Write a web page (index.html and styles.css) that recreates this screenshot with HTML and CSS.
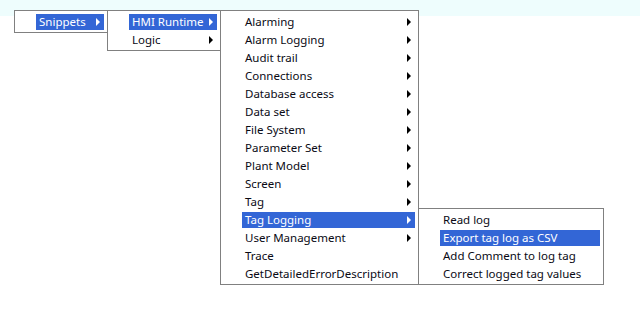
FILE: index.html
```html
<!DOCTYPE html>
<html lang="en">
<head>
    <meta charset="UTF-8">
    <title>Snippets menu</title>
    <link rel="stylesheet" href="styles.css">
</head>
<body>
    <div class="strip"></div>
    <div class="menus">
        <ul class="menu m1">
            <li class="item sel"><span>Snippets</span><i class="arrow"></i></li>
        </ul>
        <ul class="menu m2">
            <li class="item sel"><span>HMI Runtime</span><i class="arrow"></i></li>
            <li class="item"><span>Logic</span><i class="arrow"></i></li>
        </ul>
        <ul class="menu m3">
            <li class="item"><span>Alarming</span><i class="arrow"></i></li>
            <li class="item"><span>Alarm Logging</span><i class="arrow"></i></li>
            <li class="item"><span>Audit trail</span><i class="arrow"></i></li>
            <li class="item"><span>Connections</span><i class="arrow"></i></li>
            <li class="item"><span>Database access</span><i class="arrow"></i></li>
            <li class="item"><span>Data set</span><i class="arrow"></i></li>
            <li class="item"><span>File System</span><i class="arrow"></i></li>
            <li class="item"><span>Parameter Set</span><i class="arrow"></i></li>
            <li class="item"><span>Plant Model</span><i class="arrow"></i></li>
            <li class="item"><span>Screen</span><i class="arrow"></i></li>
            <li class="item"><span>Tag</span><i class="arrow"></i></li>
            <li class="item sel"><span>Tag Logging</span><i class="arrow"></i></li>
            <li class="item"><span>User Management</span><i class="arrow"></i></li>
            <li class="item"><span>Trace</span></li>
            <li class="item"><span>GetDetailedErrorDescription</span></li>
        </ul>
        <ul class="menu m4">
            <li class="item"><span>Read log</span></li>
            <li class="item sel"><span>Export tag log as CSV</span></li>
            <li class="item"><span>Add Comment to log tag</span></li>
            <li class="item"><span>Correct logged tag values</span></li>
        </ul>
    </div>
</body>
</html>
```

FILE: styles.css
```css
/*--page------------------------------------------------------------*/
html, body {
    margin: 0;
    padding: 0;
    background: #fff;
}
body {
    position: relative;
    width: 640px;
    height: 311px;
    overflow: hidden;
    font-family: "Noto Sans", "Open Sans", sans-serif;
    font-size: 11.5px;
    color: #0a0a14;
}
.strip {
    position: absolute;
    left: 0;
    top: 0;
    width: 100%;
    height: 16px;
    background: #eefdfd;
}

/*--cascading menus--------------------------------------------------*/
.menus {
    position: relative;
    display: flex;
    align-items: flex-start;
    padding: 10px 0 0 14px;
}
.menu {
    list-style: none;
    margin: 0 0 0 -1px;
    padding: 3px 3px 0 21px;
    border: 1px solid #808080;
    background: #fff;
}
.menu.m1 { margin-left: 0; width: 68px; }
.menu.m2 { width: 88px; }
.menu.m3 { width: 173px; }
.menu.m4 { width: 160px; margin-top: 198px; }

.item {
    display: flex;
    justify-content: space-between;
    align-items: center;
    box-sizing: border-box;
    height: 16px;
    margin-bottom: 2px;
    padding: 0 4px 1px 3px;
    white-space: nowrap;
    line-height: 15px;
}
.item.sel {
    background: #3366d6;
    color: #fff;
}
.arrow {
    display: block;
    width: 0;
    height: 0;
    margin-top: 1px;
    border-left: 4px solid #000;
    border-top: 4px solid transparent;
    border-bottom: 4px solid transparent;
}
.item.sel .arrow {
    border-left-color: #fff;
}
```
